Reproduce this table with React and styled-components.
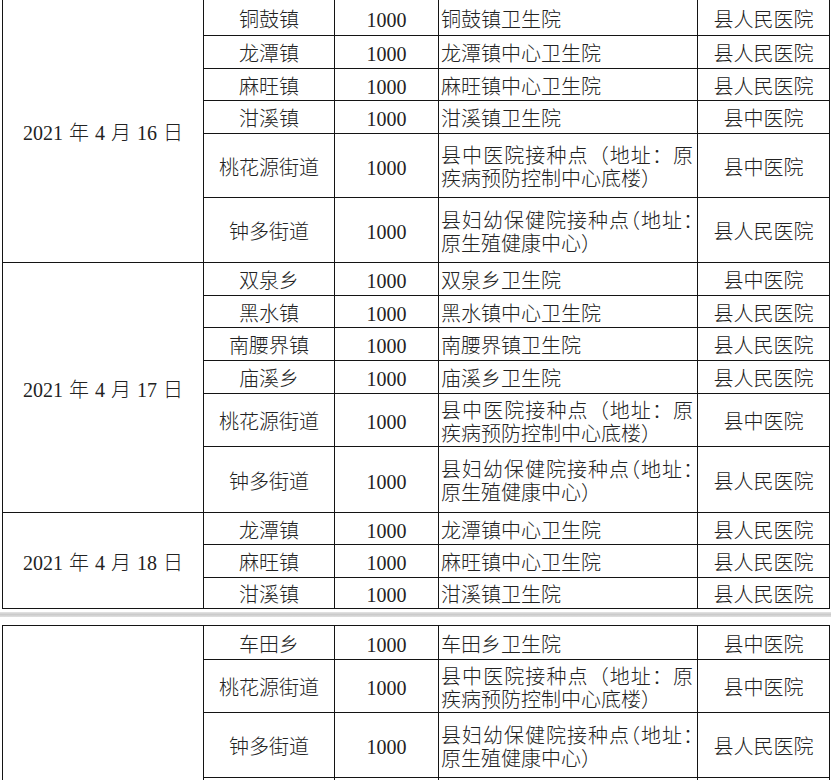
import styled, { createGlobalStyle } from 'styled-components';

const GlobalStyle = createGlobalStyle`
  body {
    margin: 0;
    background: #fff;
  }
`;

const Page = styled.div`
  width: 831px;
  height: 780px;
  overflow: hidden;
  padding-left: 2px;
  box-sizing: border-box;
  font-family: "Liberation Serif", "Noto Sans CJK SC", serif;
  font-size: 20px;
  font-weight: 300;
  color: #222;
`;

const Table = styled.table`
  border-collapse: collapse;
  table-layout: fixed;
  width: 827px;
`;

const Col = styled.col`
  width: ${(props) => props.$w}px;
`;

const Row = styled.tr`
  height: ${(props) => props.$h}px;
`;

const Cell = styled.td`
  border: 1px solid #141414;
  border-top: ${(props) => (props.$noTop ? 'none' : '1px solid #141414')};
  padding: ${(props) => (props.$left ? '6px 4px 0 2px' : '6px 0 0')};
  text-align: ${(props) => (props.$left ? 'left' : 'center')};
  vertical-align: middle;
  line-height: 23px;
  white-space: nowrap;
  overflow: hidden;
`;

const DateCell = styled(Cell)`
  word-spacing: 1px;
`;

const Line = styled.div`
  text-align: left;
  text-align-last: ${(props) => (props.$justify ? 'justify' : 'auto')};
  font-feature-settings: ${(props) => (props.$tight ? '"halt"' : 'normal')};
`;

const Divider = styled.div`
  height: 5px;
  margin: 3px 0 8px -2px;
  background: linear-gradient(#e4e4e4, #cbcbcb 50%, #e0e0e0);
`;

const SITE1 = ['县中医院接种点（地址：原', '疾病预防控制中心底楼）'];
const SITE2 = ['县妇幼保健院接种点（地址：', '原生殖健康中心）'];

const table1 = [
  {
    date: '2021 年 4 月 16 日',
    rows: [
      { town: '铜鼓镇', site: ['铜鼓镇卫生院'], hosp: '县人民医院', h: 35 },
      { town: '龙潭镇', site: ['龙潭镇中心卫生院'], hosp: '县人民医院', h: 33 },
      { town: '麻旺镇', site: ['麻旺镇中心卫生院'], hosp: '县人民医院', h: 32 },
      { town: '泔溪镇', site: ['泔溪镇卫生院'], hosp: '县中医院', h: 33 },
      { town: '桃花源街道', site: SITE1, hosp: '县中医院', h: 64 },
      { town: '钟多街道', site: SITE2, tight: true, hosp: '县人民医院', h: 65 },
    ],
  },
  {
    date: '2021 年 4 月 17 日',
    rows: [
      { town: '双泉乡', site: ['双泉乡卫生院'], hosp: '县中医院', h: 33 },
      { town: '黑水镇', site: ['黑水镇中心卫生院'], hosp: '县人民医院', h: 32 },
      { town: '南腰界镇', site: ['南腰界镇卫生院'], hosp: '县人民医院', h: 33 },
      { town: '庙溪乡', site: ['庙溪乡卫生院'], hosp: '县人民医院', h: 33 },
      { town: '桃花源街道', site: SITE1, hosp: '县中医院', h: 53 },
      { town: '钟多街道', site: SITE2, tight: true, hosp: '县人民医院', h: 66 },
    ],
  },
  {
    date: '2021 年 4 月 18 日',
    rows: [
      { town: '龙潭镇', site: ['龙潭镇中心卫生院'], hosp: '县人民医院', h: 32 },
      { town: '麻旺镇', site: ['麻旺镇中心卫生院'], hosp: '县人民医院', h: 33 },
      { town: '泔溪镇', site: ['泔溪镇卫生院'], hosp: '县人民医院', h: 31 },
    ],
  },
];

const table2 = [
  {
    date: '',
    rows: [
      { town: '车田乡', site: ['车田乡卫生院'], hosp: '县中医院', h: 34 },
      { town: '桃花源街道', site: SITE1, hosp: '县中医院', h: 53 },
      { town: '钟多街道', site: SITE2, tight: true, hosp: '县人民医院', h: 65 },
      { town: '', site: [], hosp: '', count: '', h: 34 },
    ],
  },
];

function Site({ lines, tight }) {
  return lines.map((text, i) => (
    <Line key={i} $justify={lines.length > 1 && i === 0} $tight={tight}>
      {text}
    </Line>
  ));
}

function Schedule({ groups, first }) {
  return (
    <Table>
      <colgroup>
        <Col $w={201} />
        <Col $w={131} />
        <Col $w={104} />
        <Col $w={259} />
        <Col $w={132} />
      </colgroup>
      <tbody>
        {groups.map((g, gi) =>
          g.rows.map((r, ri) => {
            const noTop = first && gi === 0 && ri === 0;
            return (
              <Row key={gi + '-' + ri} $h={r.h}>
                {ri === 0 && (
                  <DateCell rowSpan={g.rows.length} $noTop={noTop}>
                    {g.date}
                  </DateCell>
                )}
                <Cell $noTop={noTop}>{r.town}</Cell>
                <Cell $noTop={noTop}>{r.count ?? '1000'}</Cell>
                <Cell $noTop={noTop} $left>
                  <Site lines={r.site} tight={r.tight} />
                </Cell>
                <Cell $noTop={noTop}>{r.hosp}</Cell>
              </Row>
            );
          })
        )}
      </tbody>
    </Table>
  );
}

export default function App() {
  return (
    <Page>
      <GlobalStyle />
      <Schedule groups={table1} first />
      <Divider />
      <Schedule groups={table2} />
    </Page>
  );
}
